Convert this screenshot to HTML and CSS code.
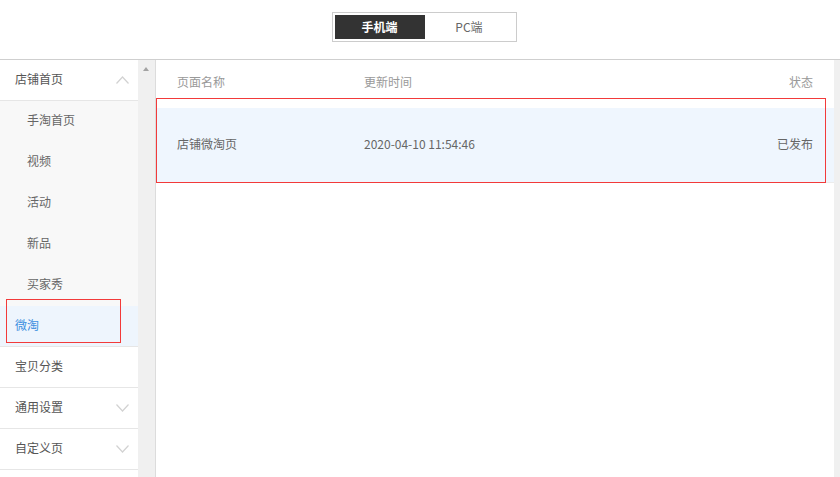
FILE: index.html
```html
<!DOCTYPE html>
<html>
<head>
  <meta charset="utf-8">
  <link rel="stylesheet" href="styles.css">
</head>
<body>
  <div class="top">
    <div class="switch">
      <span class="switch-item on">手机端</span>
      <span class="switch-item">PC端</span>
    </div>
  </div>

  <div class="main">
    <aside class="side">
      <div class="group-title">
        <span>店铺首页</span>
        <svg class="chev" width="13" height="8" viewBox="0 0 13 8"><path d="M0.5 7.5 L6.5 1 L12.5 7.5" fill="none" stroke="#d2d2d2" stroke-width="1.2"/></svg>
      </div>
      <ul class="sub">
        <li>手淘首页</li>
        <li>视频</li>
        <li>活动</li>
        <li>新品</li>
        <li>买家秀</li>
        <li class="current">微淘</li>
      </ul>
      <div class="group-title"><span>宝贝分类</span></div>
      <div class="group-title">
        <span>通用设置</span>
        <svg class="chev" width="13" height="8" viewBox="0 0 13 8"><path d="M0.5 0.5 L6.5 7 L12.5 0.5" fill="none" stroke="#d2d2d2" stroke-width="1.2"/></svg>
      </div>
      <div class="group-title">
        <span>自定义页</span>
        <svg class="chev" width="13" height="8" viewBox="0 0 13 8"><path d="M0.5 0.5 L6.5 7 L12.5 0.5" fill="none" stroke="#d2d2d2" stroke-width="1.2"/></svg>
      </div>
    </aside>

    <div class="side-scroll"><span class="arrow-up"></span></div>

    <section class="content">
      <div class="thead">
        <span class="col-name">页面名称</span>
        <span class="col-time">更新时间</span>
        <span class="col-state">状态</span>
      </div>
      <div class="trow">
        <span class="col-name">店铺微淘页</span>
        <span class="col-time">2020-04-10 11:54:46</span>
        <span class="col-state">已发布</span>
      </div>
    </section>

    <div class="right-scroll"></div>

    <!-- annotation boxes -->
    <div class="mark mark-side"></div>
    <div class="mark mark-row"></div>
  </div>
</body>
</html>
```

FILE: styles.css
```css
* {
  box-sizing: border-box;
}

body {
  margin: 0;
  background: #fff;
  font-family: "Noto Sans CJK SC", "Liberation Sans", sans-serif;
  font-size: 12px;
  color: #555;
}

/* barre du haut */
.top {
  height: 60px;
  border-bottom: 1px solid #cfcfcf;
  display: flex;
  justify-content: center;
  align-items: flex-start;
  padding-left: 8px;
}

.switch {
  margin-top: 12px;
  width: 185px;
  height: 30px;
  border: 1px solid #cccccc;
  padding: 2px;
  display: flex;
}

.switch-item {
  width: 89px;
  height: 24px;
  line-height: 23px;
  text-align: center;
  color: #666;
}

.switch-item.on {
  width: 90px;
  background: #333333;
  color: #fff;
  font-weight: bold;
}

/* zone principale */
.main {
  position: relative;
  display: flex;
  height: 417px;
}

.side {
  width: 138px;
  flex: none;
}

.group-title {
  height: 41px;
  border-bottom: 1px solid #e6e6e6;
  padding: 0 9px 3px 15px;
  display: flex;
  align-items: center;
  justify-content: space-between;
  color: #555;
}

.group-title .chev {
  margin-top: 3px;
}

.sub {
  list-style: none;
  margin: 0;
  padding: 0;
  background: #f8f8f8;
  border-bottom: 1px solid #e6e6e6;
}

.sub li {
  height: 41px;
  line-height: 38px;
  padding-left: 27px;
  color: #666;
}

.sub li.current {
  height: 40px;
  line-height: 37px;
  padding-left: 15px;
  background: #eef5fd;
  color: #3b8fe0;
}

.side-scroll {
  width: 18px;
  flex: none;
  background: #f0f0f0;
  border-right: 1px solid #dcdcdc;
  position: relative;
}

.arrow-up {
  position: absolute;
  left: 5px;
  top: 7px;
  border-left: 3.5px solid transparent;
  border-right: 3.5px solid transparent;
  border-bottom: 4px solid #a3a3a3;
}

.content {
  flex: 1;
  padding: 0 21px;
}

.thead,
.trow {
  display: flex;
  align-items: center;
}

.thead {
  height: 44px;
  padding-bottom: 2px;
  margin-bottom: 4px;
  color: #999;
}

.trow {
  height: 75px;
  margin: 0 -21px;
  padding: 0 21px 4px;
  background: #eff6fe;
  border-bottom: 1px solid #ececec;
  color: #666;
}

.col-name {
  width: 187px;
}

.col-time {
  flex: 1;
}

.col-state {
  text-align: right;
}

.right-scroll {
  width: 6px;
  flex: none;
  background: #f0f0f0;
}

/* cadres rouges */
.mark {
  position: absolute;
  border: 1px solid #f23a3a;
}

.mark-side {
  left: 6px;
  top: 239px;
  width: 115px;
  height: 44px;
}

.mark-row {
  left: 156px;
  top: 38px;
  width: 670px;
  height: 85px;
}
```
